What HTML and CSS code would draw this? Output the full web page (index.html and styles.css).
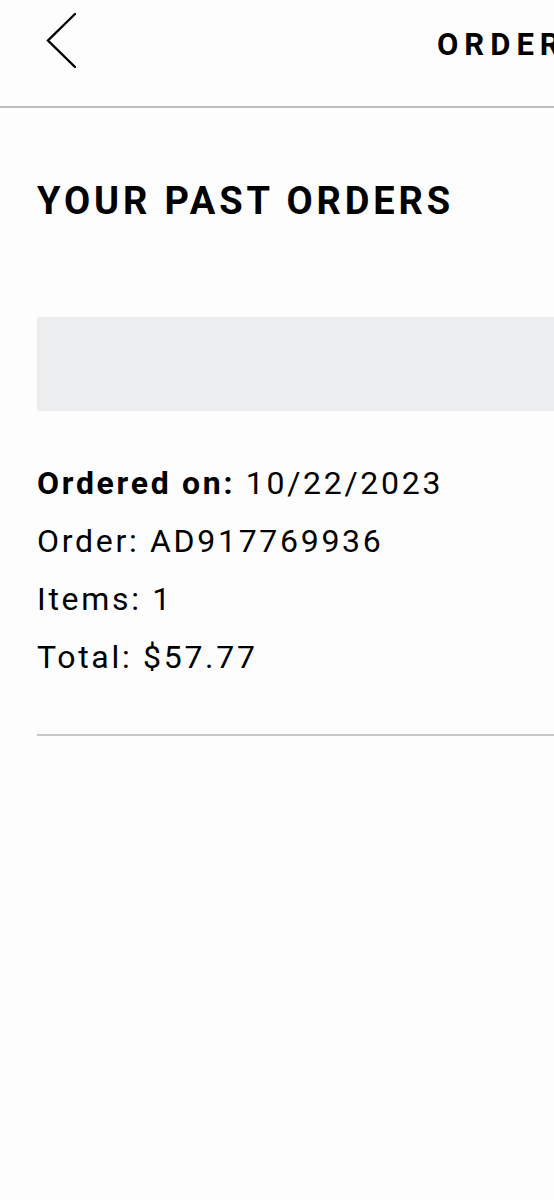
FILE: index.html
```html
<!DOCTYPE html>
<html lang="en">
<head>
<meta charset="utf-8">
<title>Orders</title>
<link rel="stylesheet" href="styles.css">
</head>
<body>
<header class="topbar">
  <button class="back" aria-label="Back">
    <svg width="32" height="58" viewBox="0 0 32 58" fill="none" stroke="#000" stroke-width="2.4" stroke-linecap="round" stroke-linejoin="miter">
      <polyline points="31,3 4,29.5 31,56"/>
    </svg>
  </button>
  <h1 class="title">ORDERS</h1>
</header>
<main class="content">
  <h2 class="heading">YOUR PAST ORDERS</h2>
  <div class="banner"></div>
  <div class="details">
    <p class="line"><strong>Ordered on:</strong> 10/22/2023</p>
    <p class="line">Order: AD917769936</p>
    <p class="line">Items: 1</p>
    <p class="line">Total: $57.77</p>
  </div>
  <hr class="rule">
</main>
</body>
</html>
```
FILE: styles.css
```css
html, body {
  margin: 0;
  padding: 0;
  background: #fdfdfd;
  overflow: hidden;
}
body {
  width: 554px;
  height: 1200px;
  font-family: Roboto, "Noto Sans", sans-serif;
  color: #000;
}
.topbar {
  display: flex;
  align-items: flex-start;
  height: 108px;
  padding: 11px 0 0 44px;
  box-sizing: border-box;
  border-bottom: 2px solid #bdbdbd;
  white-space: nowrap;
  overflow: hidden;
}
.back {
  display: block;
  width: 32px;
  height: 58px;
  padding: 0;
  margin: 0;
  border: 0;
  background: none;
  flex: none;
}
.back svg { display: block; }
.title {
  margin: 18px 0 0 361px;
  font-size: 31px;
  line-height: 31px;
  font-weight: 700;
  letter-spacing: 6px;
  flex: none;
}
.content {
  padding: 0 0 0 37px;
}
.heading {
  margin: 74px 0 0;
  font-size: 38px;
  line-height: 38px;
  font-weight: 700;
  letter-spacing: 3.9px;
  white-space: nowrap;
}
.banner {
  margin-top: 97px;
  height: 94px;
  background: #ecedef;
}
.details {
  margin-top: 43px;
}
.line {
  margin: 0;
  font-size: 32px;
  line-height: 58px;
  letter-spacing: 2.7px;
  white-space: nowrap;
}
.line strong { font-weight: 700; }
.rule {
  margin: 48px 0 0;
  border: 0;
  height: 2px;
  background: #c8c8c8;
}
```
